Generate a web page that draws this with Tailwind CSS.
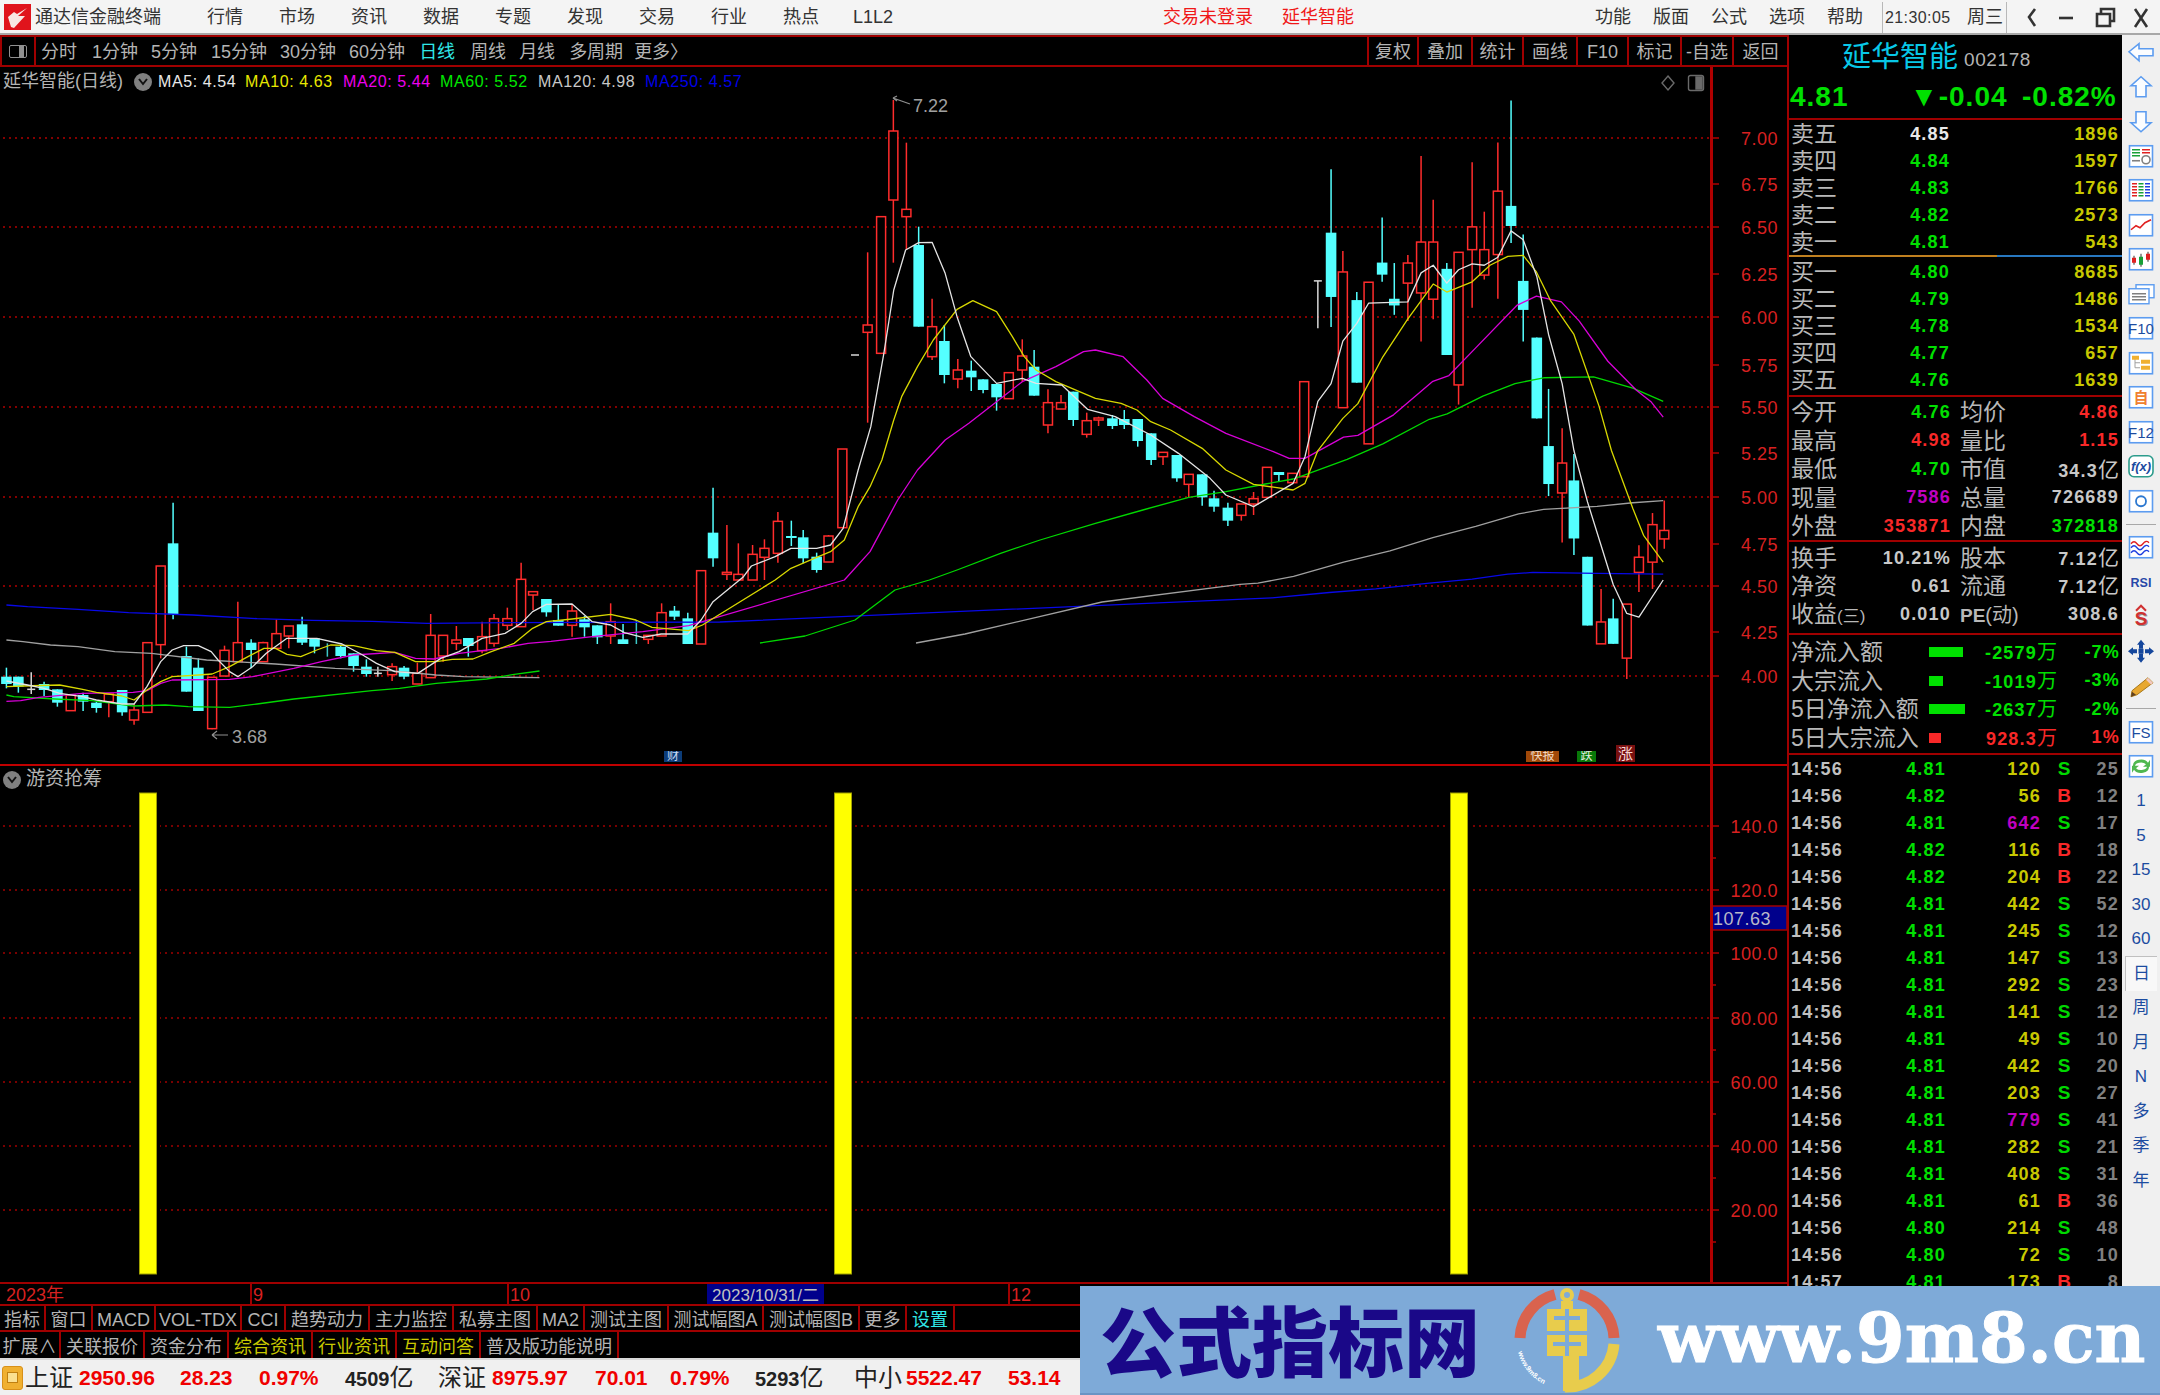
<!DOCTYPE html>
<html lang="zh-CN">
<head>
  <meta charset="UTF-8" />
  <title>通达信金融终端</title>
  <script src="https://cdn.jsdelivr.net/npm/@tailwindcss/browser@4"></script>
</head>
<body class="bg-black">
<div class="relative w-[2160px] h-[1395px] overflow-hidden bg-black flex flex-col text-[#b4b4b4] font-['Liberation_Sans','Noto_Sans_CJK_SC',sans-serif]">

  <!-- title bar -->
  <div class="h-[35px] shrink-0 bg-[#f4f4f4] border-b-2 border-[#a8a8a8] flex items-center pt-[2px] text-[18px] text-[#333] relative">
    <svg class="ml-[4px] -mt-[2px] w-[27px] h-[26px] shrink-0" viewBox="0 0 27 26">
      <rect width="27" height="26" fill="#e0141c"/>
      <path d="M23 4 L14 12 L21 12 L10 24 L7 23 L4 13 L10 8 L13 10 Z" fill="#f8e8e4"/>
    </svg>
    <span class="ml-[4px] w-[154px] whitespace-nowrap tracking-[0px]">通达信金融终端</span>
    <div id="menuLeft" class="flex"></div>
    <span class="ml-[254px] text-[#f01818] whitespace-nowrap w-[119px]">交易未登录</span>
    <span class="text-[#f01818] whitespace-nowrap w-[313px]">延华智能</span>
    <div class="flex gap-[22px] whitespace-nowrap">
      <span>功能</span><span>版面</span><span>公式</span><span>选项</span><span>帮助</span>
    </div>
    <div class="ml-[19px] h-[31px] w-[125px] border-x border-[#b8b8b8] flex items-center justify-between pl-[2px] pr-[3px] text-[16px] whitespace-nowrap">
      <span class="tracking-[0.4px]">21:30:05</span><span class="text-[18px]">周三</span>
    </div>
    <svg class="absolute left-[2020px] top-[6px] w-[140px] h-[24px]" viewBox="0 0 140 24" fill="none" stroke="#333" stroke-width="2.6">
      <path d="M15 3 L9 11 L15 20"/>
      <path d="M39 12 H53"/>
      <path d="M77 8 H90 V20 H77 Z M81 8 V3 H94 V15 H90"/>
      <path d="M115 3 L127 21 M127 3 L115 21"/>
    </svg>
  </div>

  <div class="flex flex-1 min-h-0">
    <!-- left side: toolbar, charts, tabs -->
    <div class="w-[1787px] shrink-0 flex flex-col">
      <div class="h-[32px] shrink-0 flex border-t-2 border-b-2 border-[#a00000] text-[18px] whitespace-nowrap">
        <div class="w-[36px] shrink-0 border-x-2 border-[#a00000] flex items-center justify-center">
          <div class="w-[18px] h-[13px] rounded-[2px] border border-[#909090] flex justify-end pr-[2px]"><div class="w-[5px] bg-[#909090]"></div></div>
        </div>
        <div id="periods" class="flex items-center flex-1 pt-[2px]"></div>
        <div id="tools" class="flex"></div>
      </div>

      <!-- main chart -->
      <div class="relative h-[699px] shrink-0 flex border-b-2 border-[#c00000]">
        <div class="relative w-[1710px] shrink-0">
          <svg id="kline" class="absolute inset-0" width="1710" height="697" viewBox="0 67 1710 697"></svg>
          <div class="relative h-[29px] flex items-center text-[16px] tracking-[0.6px] whitespace-nowrap">
            <span class="ml-[3px] w-[131px] text-[18px] tracking-[0px] text-[#b4b4b4]">延华智能(日线)</span>
            <span class="w-[18px] h-[18px] rounded-full bg-[#808080] flex items-center justify-center">
              <svg width="10" height="8" viewBox="0 0 10 8" fill="none" stroke="#111" stroke-width="2"><path d="M1 1 L5 6 L9 1"/></svg>
            </span>
            <span class="ml-[6px] w-[87px] text-[#e8e8e8]">MA5: 4.54</span>
            <span class="w-[98px] text-[#e8e800]">MA10: 4.63</span>
            <span class="w-[97px] text-[#ee00ee]">MA20: 5.44</span>
            <span class="w-[98px] text-[#00e800]">MA60: 5.52</span>
            <span class="w-[107px] text-[#c8c8c8]">MA120: 4.98</span>
            <span class="text-[#0000e8]">MA250: 4.57</span>
          </div>
          <svg class="absolute left-[1660px] top-[7px] w-[46px] h-[18px]" viewBox="0 0 46 18" fill="none" stroke="#6a6a6a" stroke-width="1.4">
            <path d="M8 2 L14 9 L8 16 L2 9 Z"/>
            <rect x="28.5" y="1.5" width="15" height="15" rx="2"/>
            <rect x="36" y="3" width="6" height="12" fill="#6a6a6a"/>
          </svg>
          <div class="absolute left-[664px] top-[684px] w-[18px] h-[11px] overflow-hidden bg-[#0c3c78] text-[#c8d8f0] text-[12px] leading-[11px] text-center">财</div>
          <div class="absolute left-[1526px] top-[684px] w-[33px] h-[11px] overflow-hidden bg-[#a04808] text-[#f0d8c0] text-[12px] leading-[11px] text-center">快报</div>
          <div class="absolute left-[1577px] top-[684px] w-[19px] h-[11px] overflow-hidden bg-[#087808] text-[#e0f0e0] text-[12px] leading-[11px] text-center">跌</div>
          <div class="absolute left-[1616px] top-[678px] w-[19px] h-[17px] overflow-hidden bg-[#781010] text-[#f8d8d8] text-[15px] leading-[17px] text-center">涨</div>
        </div>
        <svg id="mainAxis" class="border-l-[3px] border-[#b00000] shrink-0" width="77" height="697" viewBox="1713 67 74 697"></svg>
      </div>

      <!-- sub chart -->
      <div class="relative h-[516px] shrink-0 flex">
        <div class="relative w-[1710px] shrink-0">
          <svg id="subChart" class="absolute inset-0" width="1710" height="516" viewBox="0 766 1710 516"></svg>
          <div class="relative h-[27px] flex items-center whitespace-nowrap">
            <span class="ml-[3px] w-[18px] h-[18px] rounded-full bg-[#808080] flex items-center justify-center">
              <svg width="10" height="8" viewBox="0 0 10 8" fill="none" stroke="#111" stroke-width="2"><path d="M1 1 L5 6 L9 1"/></svg>
            </span>
            <span class="ml-[5px] text-[19px] text-[#b4b4b4]">游资抢筹</span>
          </div>
        </div>
        <svg id="subAxis" class="border-l-[3px] border-[#b00000] shrink-0" width="77" height="516" viewBox="1713 766 74 516"></svg>
      </div>

      <!-- date axis -->
      <div class="relative h-[24px] shrink-0 flex border-t-2 border-b-2 border-[#a00000] text-[18px] text-[#d82020] leading-[23px] whitespace-nowrap">
        <div class="w-[250px] pl-[6px]">2023年</div>
        <div class="w-[257px] border-l-2 border-[#a00000] pl-[1px]">9</div>
        <div class="w-[200px] border-l-2 border-[#a00000] pl-[1px]">10</div>
        <div class="w-[117px] bg-[#00008c] text-[#c0c0c0] text-center text-[17px]">2023/10/31/二</div>
        <div class="w-[184px]"></div>
        <div class="w-[100px] border-l-2 border-[#a00000] pl-[1px]">12</div>
      </div>

      <div id="tabsOne" class="h-[26px] shrink-0 flex border-b-2 border-[#a00000] text-[18px] whitespace-nowrap"></div>
      <div id="tabsTwo" class="h-[26px] shrink-0 flex text-[18px] whitespace-nowrap"></div>
    </div>

    <!-- quote panel -->
    <div class="w-[335px] shrink-0 border-l-2 border-[#a00000] flex flex-col whitespace-nowrap">
      <div class="h-[85px] shrink-0 border-b-2 border-[#a00000]">
        <div class="h-[46px] flex items-center pl-[53px]">
          <span class="text-[29px] text-[#08c8e8]">延华智能</span>
          <span class="ml-[6px] mt-[5px] text-[19px] text-[#b4b4b4] tracking-[0.6px]">002178</span>
        </div>
        <div class="h-[32px] flex items-center pl-[1px] font-bold text-[#00e000] text-[28px] tracking-[1px]">
          <span class="w-[120px]">4.81</span>
          <span class="w-[113px]">▼-0.04</span>
          <span class="-ml-[1px]">-0.82%</span>
        </div>
      </div>
      <div id="sell" class="h-[135px] shrink-0"></div>
      <div class="h-[2px] shrink-0 flex"><div class="w-[208px] bg-[#c08020]"></div><div class="flex-1 bg-[#2878c0]"></div></div>
      <div id="buy" class="h-[140px] shrink-0 pt-[1px] border-b-2 border-[#a00000]"></div>
      <div id="statsOne" class="h-[145px] shrink-0 border-b-2 border-[#a00000]"></div>
      <div id="statsTwo" class="h-[93px] shrink-0 pt-[2px] border-b-2 border-[#a00000]"></div>
      <div id="flows" class="h-[120px] shrink-0 border-b-2 border-[#a00000]"></div>
      <div id="ticks" class="flex-1 min-h-0 overflow-hidden"></div>
    </div>

    <!-- icon strip -->
    <div id="strip" class="w-[38px] shrink-0 bg-[#f0f0f0] flex flex-col items-center text-[#1c4ca0] text-[17px]"></div>
  </div>

  <!-- index ticker -->
  <div class="h-[37px] shrink-0 bg-[#f0f0f0] border-t-2 border-[#d8d8d8] flex items-center text-[24px] text-[#222] whitespace-nowrap">
    <span class="ml-[2px] w-[21px] h-[24px] rounded-[3px] bg-[#f0b030] border border-[#d89018] flex items-center justify-center"><span class="w-[11px] h-[11px] bg-[#fbe090] border border-[#c08010]"></span></span>
    <span class="ml-[2px] w-[54px]">上证</span>
    <span class="w-[101px] text-[21px] font-bold text-[#f00000]">2950.96</span>
    <span class="w-[79px] text-[21px] font-bold text-[#f00000]">28.23</span>
    <span class="w-[86px] text-[21px] font-bold text-[#f00000]">0.97%</span>
    <span class="w-[93px]"><b class="text-[20px]">4509</b>亿</span>
    <span class="w-[54px]">深证</span>
    <span class="w-[103px] text-[21px] font-bold text-[#f00000]">8975.97</span>
    <span class="w-[75px] text-[21px] font-bold text-[#f00000]">70.01</span>
    <span class="w-[85px] text-[21px] font-bold text-[#f00000]">0.79%</span>
    <span class="w-[99px]"><b class="text-[20px]">5293</b>亿</span>
    <span class="w-[52px]">中小</span>
    <span class="w-[102px] text-[21px] font-bold text-[#f00000]">5522.47</span>
    <span class="text-[21px] font-bold text-[#f00000]">53.14</span>
  </div>

  <!-- site watermark banner laid over the bottom right of the window -->
  <div class="absolute left-[1080px] top-[1286px] w-[1080px] h-[109px] bg-[#7eaad8] border-b-2 border-[#6a94c4] overflow-hidden whitespace-nowrap">
    <div class="absolute left-[20px] top-[-2px] text-[76px] leading-[109px] font-black text-[#1a0888] font-['Noto_Sans_CJK_SC',sans-serif]">公式指标网</div>
    <svg class="absolute left-[427px] top-0" width="120" height="109" viewBox="0 0 120 109" fill="none">
      <path d="M13 52 A47 47 0 0 1 48 8.5 M72 8.5 A47 47 0 0 1 107 52" stroke="#d9634e" stroke-width="11"/>
      <path d="M107 58 A47 47 0 0 1 58 101" stroke="#e8cc4c" stroke-width="11"/>
      <circle cx="60" cy="9" r="5" stroke="#e8cc4c" stroke-width="4"/>
      <path d="M54 15 H66 V23 H80 V45 H40 V23 H54 Z M40 49 H80 V70 H72 V105 H56 V70 H40 Z" fill="#e8cc4c"/>
      <path d="M47 30 H73 V34 H47 Z M58 23 H62 V45 H58 Z M46 56 H74 V60 H46 Z M58 49 H62 V70 H58 Z" fill="#7eaad8"/>
      <path id="logoArc" d="M11 66 A50 50 0 0 0 52 103"/>
      <text font-size="7" font-weight="700" fill="#ffffff"><textPath href="#logoArc">www.9m8.cn</textPath></text>
    </svg>
    <div class="absolute left-[578px] top-[-3px] text-[70px] leading-[109px] font-bold text-white [-webkit-text-stroke:1px_white] font-['DejaVu_Serif',serif]">www.9m8.cn</div>
  </div>
</div>

<script>
  const SVGNS = 'http://www.w3.org/2000/svg';
  const el = (parent, tag, attrs, text) => {
    const n = document.createElementNS(SVGNS, tag);
    for (const k in attrs) n.setAttribute(k, attrs[k]);
    if (text !== undefined) n.textContent = text;
    parent.appendChild(n);
    return n;
  };

  // title bar + toolbar
  document.getElementById('menuLeft').innerHTML = ['行情','市场','资讯','数据','专题','发现','交易','行业','热点','L1L2']
    .map(t => `<span class="w-[72px] text-center whitespace-nowrap">${t}</span>`).join('');

  document.getElementById('periods').innerHTML = [
    ['分时', 'ml-[5px]'], ['1分钟', 'ml-[15px]'], ['5分钟', 'ml-[13px]'], ['15分钟', 'ml-[14px]'], ['30分钟', 'ml-[13px]'],
    ['60分钟', 'ml-[13px]'], ['日线', 'ml-[14px] text-[#30e8e8]'], ['周线', 'ml-[15px]'], ['月线', 'ml-[13px]'],
    ['多周期', 'ml-[14px]'], ['更多〉', 'ml-[11px]']
  ].map(p => `<span class="${p[1]}">${p[0]}</span>`).join('');

  document.getElementById('tools').innerHTML = [
    ['复权','w-[50px]'],['叠加','w-[54px]'],['统计','w-[51px]'],['画线','w-[54px]'],['F10','w-[51px]'],['标记','w-[53px]'],['-自选','w-[52px]'],['返回','w-[55px]']
  ].map(t => `<span class="${t[1]} h-full flex items-center justify-center pt-[2px] border-l-2 border-[#a00000]">${t[0]}</span>`).join('');

  // tab rows
  const tab = ([t, w, c]) => `<span class="${w} ${c || ''} h-full flex items-center justify-center pt-[5px] border-r-2 border-[#a00000]">${t}</span>`;
  document.getElementById('tabsOne').innerHTML = [
    ['指标','w-[46px]'],['窗口','w-[47px]'],['MACD','w-[63px]'],['VOL-TDX','w-[86px]'],['CCI','w-[44px]'],['趋势动力','w-[84px]'],
    ['主力监控','w-[84px]'],['私募主图','w-[84px]'],['MA2','w-[47px]'],['测试主图','w-[84px]'],['测试幅图A','w-[95px]'],['测试幅图B','w-[96px]'],
    ['更多','w-[47px]'],['设置','w-[48px]','text-[#30e8e8]']
  ].map(tab).join('');
  document.getElementById('tabsTwo').innerHTML = [
    ['扩展∧','w-[61px]'],['关联报价','w-[84px]'],['资金分布','w-[84px]'],['综合资讯','w-[84px]','text-[#c8c800]'],['行业资讯','w-[84px]','text-[#c8c800]'],
    ['互动问答','w-[84px]','text-[#c8c800]'],['普及版功能说明','w-[138px]']
  ].map(tab).join('');

  // quote panel
  const lbl = 'text-[23px] text-[#b8b8b8]';
  const num = 'text-[18px] font-bold tracking-[1.2px]';
  const book = (rows) => rows.map(([l, p, v, pc]) => `
    <div class="h-[27px] flex items-center justify-between pt-[2px] pl-[2px] pr-[3px]">
      <span class="w-[97px] ${lbl}">${l}</span>
      <span class="w-[62px] text-right ${num} ${pc}">${p}</span>
      <span class="flex-1 text-right ${num} text-[#c8c800]">${v}</span>
    </div>`).join('');
  const G = 'text-[#00e000]', R = 'text-[#f82828]', W = 'text-[#c8c8c8]', M = 'text-[#c000c0]';
  document.getElementById('sell').innerHTML = book([
    ['卖五','4.85','1896','text-[#e8e8e8]'],['卖四','4.84','1597',G],['卖三','4.83','1766',G],['卖二','4.82','2573',G],['卖一','4.81','543',G]]);
  document.getElementById('buy').innerHTML = book([
    ['买一','4.80','8685',G],['买二','4.79','1486',G],['买三','4.78','1534',G],['买四','4.77','657',G],['买五','4.76','1639',G]]);

  const stat = (h, rows) => rows.map(([a, b, bc, c, d, dc]) => `
    <div class="${h} flex items-center pl-[2px] pr-[3px]">
      <span class="w-[160px] flex items-center justify-between"><span class="${lbl}">${a}</span><span class="${num} ${bc}">${b}</span></span>
      <span class="flex-1 ml-[9px] flex items-center justify-between"><span class="${lbl}">${c}</span><span class="${num} ${dc}">${d}</span></span>
    </div>`).join('');
  const yi = '<span class="text-[21px] font-normal tracking-[0px]">亿</span>';
  document.getElementById('statsOne').innerHTML = stat('h-[28.5px] pt-[2px]', [
    ['今开','4.76',G,'均价','4.86',R],['最高','4.98',R,'量比','1.15',R],['最低','4.70',G,'市值','34.3'+yi,W],
    ['现量','7586',M,'总量','726689',W],['外盘','353871',R,'内盘','372818',G]]);
  document.getElementById('statsTwo').innerHTML = stat('h-[28px]', [
    ['换手','10.21%',W,'股本','7.12'+yi,W],['净资','0.61',W,'流通','7.12'+yi,W],
    ['收益<span class="text-[17px]">(三)</span>','0.010',W,'<span class="text-[19px] font-bold">PE</span><span class="text-[20px]">(动)</span>','308.6',W]]);

  const wan = '<span class="text-[20px] font-normal tracking-[0px]">万</span>';
  document.getElementById('flows').innerHTML = [
    ['净流入额','-2579','-7%',G,'w-[34px] bg-[#00e000]'],['大宗流入','-1019','-3%',G,'w-[14px] bg-[#00e000]'],
    ['5日净流入额','-2637','-2%',G,'w-[36px] bg-[#00e000]'],['5日大宗流入','928.3','1%',R,'w-[12px] bg-[#f82828]']
  ].map(([l, a, p, c, b]) => `
    <div class="h-[28.5px] grid grid-cols-[138px_40px_88px_1fr] items-center pl-[2px] pr-[2px]">
      <span class="text-[23px] text-[#b8b8b8]">${l}</span>
      <span class="h-[10px] ${b}"></span>
      <span class="text-right ${num} ${c}">${a}${wan}</span>
      <span class="text-right ${num} ${c}">${p}</span>
    </div>`).join('');

  const tickRows = [
    ['14:56','4.81','120','S','25'],['14:56','4.82','56','B','12'],['14:56','4.81','642','S','17'],['14:56','4.82','116','B','18'],
    ['14:56','4.82','204','B','22'],['14:56','4.81','442','S','52'],['14:56','4.81','245','S','12'],['14:56','4.81','147','S','13'],
    ['14:56','4.81','292','S','23'],['14:56','4.81','141','S','12'],['14:56','4.81','49','S','10'],['14:56','4.81','442','S','20'],
    ['14:56','4.81','203','S','27'],['14:56','4.81','779','S','41'],['14:56','4.81','282','S','21'],['14:56','4.81','408','S','31'],
    ['14:56','4.81','61','B','36'],['14:56','4.80','214','S','48'],['14:56','4.80','72','S','10'],['14:57','4.81','173','B','8']
  ];
  document.getElementById('ticks').innerHTML = tickRows.map(([t, p, v, s, n]) => {
    const vc = (v === '642' || v === '779') ? 'text-[#c000c0]' : 'text-[#c8c800]';
    const sc = s === 'B' ? 'text-[#f82828]' : 'text-[#00d800]';
    return `<div class="h-[27px] grid grid-cols-[60px_95px_95px_46px_32px] items-center pl-[2px]">
      <span class="${num} text-[#c0c0c0]">${t}</span>
      <span class="text-right ${num} text-[#00e000]">${p}</span>
      <span class="text-right ${num} ${vc}">${v}</span>
      <span class="text-center text-[19px] font-bold ${sc}">${s}</span>
      <span class="text-right ${num} text-[#808080]">${n}</span>
    </div>`;
  }).join('');

  // icon strip
  const frame = '<rect x="3.5" y="2" width="23" height="21" fill="#ffffff" stroke="#5c9cf0" stroke-width="1.6"/>';
  const ic = (body) => `<svg class="h-[34.5px] w-[30px] shrink-0" viewBox="0 0 30 25">${body}</svg>`;
  const ftxt = (t, c) => `${frame}<text x="15" y="18" text-anchor="middle" font-size="15" fill="${c}">${t}</text>`;
  const arrow = (d) => `<path d="${d}" fill="#fbfdff" stroke="#5c9cf0" stroke-width="1.6"/>`;
  const sep = '<div class="h-[12px] w-full shrink-0 flex items-center justify-center"><div class="w-[30px] h-[1px] bg-[#a8a8a8]"></div></div>';
  const word = (t, c) => `<div class="h-[34.5px] shrink-0 flex items-center justify-center ${c || ''}">${t}</div>`;
  document.getElementById('strip').innerHTML = [
    ic(arrow('M3 12 L13 4 V9 H27 V16 H13 V21 Z')),
    ic(arrow('M15 2 L25 11 H20 V22 H10 V11 H5 Z')),
    ic(arrow('M15 23 L25 14 H20 V3 H10 V14 H5 Z')),
    ic(frame + '<path d="M6 6 H14 M6 9 H14 M6 12 H14" stroke="#18a038" stroke-width="1.6"/><path d="M16 6 H24 M16 9 H24" stroke="#e02020" stroke-width="1.6"/><path d="M6 17 H14" stroke="#808080" stroke-width="1.6"/><circle cx="20" cy="16" r="4" fill="#fff" stroke="#808080" stroke-width="1.6"/>'),
    ic(frame + '<path d="M6 6 H11 M6 9 H11 M6 12 H11 M6 15 H11 M6 18 H11" stroke="#e02020" stroke-width="1.6"/><path d="M12.5 6 H17.5 M12.5 9 H17.5 M12.5 12 H17.5 M12.5 15 H17.5 M12.5 18 H17.5" stroke="#18a038" stroke-width="1.6"/><path d="M19 6 H24 M19 9 H24 M19 12 H24 M19 15 H24 M19 18 H24" stroke="#2040e0" stroke-width="1.6"/>'),
    ic(frame + '<path d="M5 17 L10 13 L14 15 L19 10 L25 7" fill="none" stroke="#e02020" stroke-width="1.6"/>'),
    ic(frame + '<path d="M8 9 V18 M15 7 V20 M22 5 V15" stroke="#333" stroke-width="1"/><rect x="6" y="11" width="4" height="5" fill="#e02020"/><rect x="13" y="10" width="4" height="8" fill="#18a038"/><rect x="20" y="7" width="4" height="6" fill="#e02020"/>'),
    ic('<rect x="10" y="3" width="18" height="13" fill="#fff" stroke="#5c9cf0" stroke-width="1.4"/><rect x="3" y="7" width="20" height="15" fill="#fff" stroke="#5c9cf0" stroke-width="1.4"/><path d="M6 12 H20 M6 15 H20 M6 18 H20" stroke="#808080" stroke-width="1.4"/>'),
    ic(ftxt('F10', '#1c4ca0')),
    ic(frame + '<path d="M9 7 V17 H14 M9 12 H14" fill="none" stroke="#a0a0a0"/><rect x="6" y="5" width="7" height="4" fill="#f0b030"/><rect x="15" y="9" width="9" height="4" fill="#f0b030"/><rect x="15" y="15" width="9" height="4" fill="#f0b030"/>'),
    ic(frame + '<text x="15" y="18.5" text-anchor="middle" font-size="15" font-weight="700" fill="#f08030">自</text>'),
    ic(ftxt('F12', '#1c4ca0')),
    ic('<rect x="3" y="2" width="24" height="21" rx="5" fill="#fff" stroke="#2c9c8c" stroke-width="1.6"/><text x="15" y="17" text-anchor="middle" font-size="13" font-style="italic" font-weight="700" fill="#1c4ca0">f(x)</text>'),
    ic(frame + '<circle cx="15" cy="12.5" r="5" fill="none" stroke="#2c78d0" stroke-width="1.8"/>'),
    sep,
    ic(frame + '<path d="M5 9 Q8 5 11 9 T17 9 T23 8" fill="none" stroke="#e02020" stroke-width="1.3"/><path d="M5 13 Q8 9 11 13 T17 13 T23 12" fill="none" stroke="#2040e0" stroke-width="1.3"/><path d="M5 18 Q8 14 11 18 T17 18 T23 17" fill="none" stroke="#2040e0" stroke-width="1.3"/>'),
    ic('<text x="15" y="17" text-anchor="middle" font-size="12.5" font-weight="700" fill="#2848a8">RSI</text>'),
    ic('<path d="M10 7 L15 2 L20 7" fill="none" stroke="#d03030" stroke-width="2"/><text x="16" y="22" text-anchor="middle" font-size="19" font-weight="700" fill="#909090">S</text><text x="15" y="21" text-anchor="middle" font-size="19" font-weight="700" fill="#d03030">S</text>'),
    ic('<path d="M15 1 L19 6 H17 V10 H13 V6 H11 Z M15 24 L19 19 H17 V15 H13 V19 H11 Z M2 12.5 L7 8.5 V10.5 H11 V14.5 H7 V16.5 Z M28 12.5 L23 8.5 V10.5 H19 V14.5 H23 V16.5 Z" fill="#14469c"/><rect x="12.5" y="10" width="5" height="5" fill="#14469c"/>'),
    ic('<path d="M6 18 L22 5 L27 10 L11 22 L5 24 Z" fill="#e8a830" stroke="#a87818"/><path d="M22 5 L27 10 L25 12 L20 7 Z" fill="#f0c8c0"/><path d="M5 24 L6 19 L10 22 Z" fill="#604020"/>'),
    sep,
    ic(ftxt('FS', '#1c4ca0')),
    ic(frame + '<path d="M7 12 A8 6 0 0 1 22 9 L24 6 V13 H17 L20 10.5 A6 4 0 0 0 9 13 Z M23 13 A8 6 0 0 1 8 16 L6 19 V12 H13 L10 14.5 A6 4 0 0 0 21 12 Z" fill="#50b850"/>'),
    word('1'), word('5'), word('15'), word('30'), word('60'),
    word('日', 'w-[32px] bg-[#f8f8f8] border-t border-l border-[#c0c0c0]'), word('周'), word('月'), word('N'), word('多'), word('季'), word('年')
  ].join('');

  // chart data, read off the picture: [x, high, top, bottom, low, type]
  const z6 = ([x, y]) => [x / 2.178, 480 + y / 3];
  const z7 = ([x, y]) => [700 + x / 2.529, 80 + y / 3];
  const z8 = ([x, y]) => [1240 + x / 2.8, 80 + y / 2.24];

  const c6 = [
    [14,563,590,612,625,'c'],[40,590,590,620,638,'c'],[68,577,628,628,642,'w'],[96,605,612,630,648,'c'],[125,628,628,668,680,'c'],
    [154,645,645,692,692,'r'],[181,638,645,665,693,'c'],[210,665,668,684,698,'c'],[237,640,642,665,712,'r'],[266,630,630,697,707,'c'],
    [292,672,690,720,734,'r'],[321,488,488,697,697,'r'],[350,258,258,494,535,'r'],[377,68,190,403,418,'c'],[406,500,528,635,635,'c'],
    [432,535,563,693,693,'c'],[462,592,592,746,748,'r'],[489,497,511,588,588,'r'],[518,365,488,545,545,'r'],[547,478,488,510,565,'c'],
    [573,485,488,545,545,'r'],[602,418,461,505,505,'r'],[629,438,438,468,505,'r'],[658,410,433,488,495,'c'],[685,475,475,500,520,'c'],
    [713,490,510,510,530,'l'],[742,495,500,528,535,'c'],[770,520,520,558,575,'c'],[798,538,560,582,590,'c'],[823,560,580,580,590,'w'],
    [854,550,560,584,603,'r'],[880,558,563,590,598,'c'],[909,548,580,612,612,'r'],[938,402,466,593,593,'r'],[965,466,466,528,545,'r'],
    [994,438,480,490,510,'r'],[1020,474,474,498,530,'c'],[1050,425,470,512,520,'r'],[1076,402,416,490,500,'r'],[1105,383,416,436,450,'r'],
    [1135,248,298,440,440,'r'],[1161,335,335,345,390,'r'],[1190,357,357,397,410,'c'],[1216,375,420,437,437,'c'],[1246,375,393,436,470,'r'],
    [1273,408,418,442,470,'c'],[1301,436,436,472,492,'c'],[1330,370,425,468,492,'r'],[1357,432,478,492,492,'c'],[1386,420,450,450,492,'l'],
    [1412,466,466,478,492,'r'],[1441,370,398,468,468,'r'],[1469,378,392,410,420,'c'],[1498,398,415,492,492,'c'],[1527,272,272,492,492,'r']
  ];
  const c7 = [
    [33,1223,1358,1435,1460,'c'],[68,1335,1477,1482,1500,'r'],[97,1390,1483,1500,1500,'r'],[133,1395,1423,1500,1500,'r'],[163,1378,1405,1432,1500,'r'],
    [197,1296,1324,1420,1448,'r'],[231,1322,1368,1374,1398,'c'],[261,1350,1372,1435,1450,'c'],[295,1418,1430,1470,1478,'c'],[325,1365,1368,1446,1446,'r'],
    [360,1107,1107,1343,1343,'r'],[392,825,825,825,825,'w'],[424,517,735,757,1028,'r'],[458,410,410,820,820,'r'],[489,60,153,360,548,'r'],
    [522,188,388,410,510,'r'],[553,440,495,740,740,'c'],[587,656,740,830,840,'r'],[618,735,783,885,910,'c'],[652,837,870,897,925,'r'],
    [686,842,872,892,933,'c'],[716,898,898,930,940,'c'],[750,912,912,952,992,'c'],[781,878,878,956,956,'r'],[815,778,828,870,905,'r'],
    [845,810,860,947,947,'c'],[880,928,968,1035,1060,'r'],[913,945,968,987,987,'r'],[944,935,935,1020,1038,'c'],[978,998,1022,1063,1073,'r'],
    [1008,1010,1014,1020,1038,'r'],[1043,1005,1015,1038,1047,'c'],[1073,990,1017,1035,1047,'c'],[1107,1017,1017,1083,1100,'c'],[1141,1060,1060,1140,1155,'c'],
    [1171,1117,1117,1130,1155,'r'],[1206,1125,1125,1195,1205,'c'],[1236,1183,1183,1213,1252,'r'],[1270,1183,1183,1252,1277,'c'],[1300,1232,1255,1280,1295,'c'],
    [1335,1268,1283,1322,1338,'c'],[1369,1272,1272,1306,1322,'r'],[1400,1236,1256,1272,1305,'r'],[1434,1162,1162,1252,1252,'r'],[1464,1176,1176,1185,1205,'c'],
    [1498,1180,1180,1208,1208,'r'],[1528,905,905,1190,1190,'r']
  ];
  const c8 = [
    [218,450,450,450,556,'w'],[255,200,342,486,553,'c'],[288,383,430,734,734,'r'],[327,475,493,678,678,'c'],[360,453,453,815,815,'r'],
    [398,308,409,436,452,'c'],[432,410,490,505,526,'c'],[470,392,410,455,540,'r'],[507,170,363,477,586,'r'],[541,268,363,491,536,'r'],
    [579,410,423,616,616,'c'],[612,386,386,683,727,'r'],[650,184,329,380,510,'r'],[684,295,380,437,447,'r'],[722,140,249,391,490,'r'],
    [759,46,282,327,365,'c'],[793,346,450,515,586,'c'],[831,577,577,758,758,'c'],[864,692,820,905,932,'c'],[902,780,858,925,1036,'r'],
    [935,838,897,1027,1064,'c'],[973,1068,1068,1222,1222,'c'],[1011,1140,1214,1263,1263,'r'],[1045,1162,1206,1263,1263,'c'],[1083,1174,1174,1295,1342,'r'],
    [1117,1042,1069,1103,1147,'r'],[1155,970,996,1080,1140,'r'],[1188,942,1009,1028,1050,'r']
  ];

  const pts = (list, fn) => list.map(p => fn(p));
  const MA5 = [
    ...pts([[14,603],[60,615],[96,625],[130,640],[180,650],[210,660],[266,672],[292,672],[320,620],[350,545],[375,510],[400,497],[432,497],[460,515],[475,540],[500,575],[518,590],[550,560],[580,520],[625,475],[690,475],[745,492],[790,525],[820,550],[860,575],[910,580],[960,535],[1000,515],[1050,475],[1100,460],[1135,430],[1160,395],[1190,373],[1246,372],[1290,425],[1330,435],[1360,458],[1400,472],[1440,462],[1498,462],[1527,420],[1553,365]], z6),
    ...pts([[110,1490],[130,1458],[190,1430],[230,1405],[295,1405],[330,1395],[362,1345],[400,1170],[432,1040],[465,820],[490,630],[520,510],[553,488],[587,487],[620,580],[650,710],[685,830],[750,910],[815,895],[850,910],[915,915],[980,988],[1050,1010],[1140,1065],[1210,1120],[1290,1195],[1330,1245],[1400,1280],[1500,1210],[1530,1130]], z7),
    ...pts([[218,720],[255,680],[288,585],[327,545],[360,500],[470,497],[507,432],[541,415],[579,455],[612,425],[650,412],[684,415],[722,397],[759,338],[793,358],[831,440],[864,570],[902,680],[935,830],[973,945],[1010,1040],[1045,1130],[1083,1195],[1117,1203],[1185,1120]], z8)
  ];
  const MA10 = [
    ...pts([[14,620],[50,618],[130,615],[180,628],[210,637],[266,648],[292,660],[320,630],[350,605],[375,590],[432,585],[462,582],[500,560],[540,530],[575,505],[600,505],[625,523],[655,530],[690,510],[720,495],[770,497],[820,512],[860,517],[905,545],[950,545],[985,538],[1030,537],[1070,515],[1120,490],[1160,445],[1190,425],[1246,417],[1330,403],[1385,420],[1420,442],[1500,452],[1530,435]], z6),
    ...pts([[190,1500],[230,1465],[295,1432],[330,1415],[365,1380],[400,1280],[430,1220],[460,1140],[490,1020],[510,950],[550,860],[590,780],[650,688],[690,662],[750,695],[790,770],[820,830],[850,870],[900,905],[1000,955],[1065,970],[1105,990],[1140,1025],[1190,1050],[1270,1105],[1330,1170],[1400,1213],[1500,1230],[1530,1210]], z7),
    ...pts([[218,830],[288,758],[330,725],[400,620],[470,535],[541,457],[579,475],[650,452],[700,415],[750,395],[793,393],[830,430],[870,495],[935,570],[1005,730],[1040,830],[1100,960],[1130,1020],[1185,1080]], z8)
  ];
  const MA20 = [
    ...pts([[14,664],[45,662],[85,652],[180,640],[290,637],[320,632],[350,610],[375,600],[500,598],[550,590],[640,565],[700,545],[770,525],[860,517],[905,535],[945,537],[1000,520],[1090,505],[1150,490],[1200,484],[1290,470],[1400,455],[1500,437]], z6),
    ...pts([[365,1500],[430,1415],[500,1260],[550,1170],[620,1080],[680,1030],[750,965],[815,905],[900,860],[970,815],[1000,810],[1070,830],[1130,900],[1170,955],[1250,1010],[1330,1060],[1450,1115],[1490,1135],[1530,1135]], z7),
    ...pts([[290,800],[330,796],[430,750],[540,675],[585,662],[660,600],[775,505],[830,484],[900,497],[950,540],[1030,630],[1110,695],[1150,720],[1185,755]], z8)
  ];
  const MA60a = pts([[14,645],[30,650],[120,657],[200,662],[290,678],[360,675],[410,680],[500,682],[560,672],[640,657],[810,632],[870,625],[950,610],[1060,597],[1120,583],[1175,573]], z6);
  const MA60b = [[760,643],[805,636],[855,620],[895,590],
    ...pts([[580,1500],[650,1470],[760,1420],[860,1380],[1000,1330],[1120,1290],[1236,1252],[1330,1235],[1430,1212],[1500,1197]], z7),
    ...pts([[180,885],[300,850],[400,815],[530,760],[580,748],[680,708],[770,680],[850,667],[990,665],[1100,690],[1185,720]], z8)];
  const MA120a = pts([[14,480],[50,485],[110,495],[170,500],[250,515],[330,520],[450,540],[600,552],[730,565],[850,572],[950,585],[1010,590],[1175,593]], z6);
  const MA120b = [[916,643],[965,634],[1102,602],
    ...pts([[0,1130],[50,1127],[150,1112],[290,1080],[420,1055],[540,1025],[660,1000],[780,972],[850,962],[1000,955],[1100,947],[1185,942]], z8)];
  const MA250 = [
    ...pts([[14,375],[60,380],[170,388],[280,398],[420,405],[560,416],[680,421],[810,424],[930,430],[1120,428],[1568,426]], z6),
    ...pts([[90,1160],[250,1148],[380,1140],[530,1127],[650,1118],[750,1107],[820,1103],[1000,1105],[1185,1107]], z8)
  ];

  const kline = document.getElementById('kline');
  [138,227,317,407,497,586,676].forEach(y =>
    el(kline, 'line', { x1: 3, x2: 1710, y1: y, y2: y, stroke: '#b00000', 'stroke-width': 1.4, 'stroke-dasharray': '2 4' }));

  const drawCandle = ([x, hi, top, bot, lo, t]) => {
    const color = (t === 'r') ? '#ff2c2c' : (t === 'w') ? '#d8d8d8' : '#54ffff';
    el(kline, 'line', { x1: x, x2: x, y1: hi, y2: lo, stroke: t === 'l' ? '#3cc8c8' : color, 'stroke-width': 1.5 });
    if (t === 'w') { el(kline, 'line', { x1: x - 4, x2: x + 4, y1: top, y2: top, stroke: color, 'stroke-width': 1.5 }); return; }
    if (t === 'l') return;
    if (t === 'r') el(kline, 'rect', { x: x - 4.5, y: top, width: 9, height: Math.max(bot - top, 2), fill: '#000', stroke: color, 'stroke-width': 1.5 });
    else el(kline, 'rect', { x: x - 5.3, y: top, width: 10.6, height: Math.max(bot - top, 2), fill: color });
  };
  const toFull = (list, fn) => list.map(c => {
    const [x, hi] = fn([c[0], c[1]]);
    const [, top] = fn([0, c[2]]);
    const [, bot] = fn([0, c[3]]);
    const [, lo] = fn([0, c[4]]);
    return [x, hi, top, bot, lo, c[5]];
  });
  [...toFull(c6, z6), ...toFull(c7, z7), ...toFull(c8, z8)].forEach(drawCandle);

  const poly = (list, color) => el(kline, 'polyline', {
    points: list.map(p => p.join(',')).join(' '), fill: 'none', stroke: color, 'stroke-width': 1.3, 'stroke-linejoin': 'round'
  });
  poly(MA250, '#0808e8'); poly(MA120a, '#a0a0a0'); poly(MA120b, '#a0a0a0');
  poly(MA60a, '#00d800'); poly(MA60b, '#00d800'); poly(MA20, '#d800d8'); poly(MA10, '#d8d800'); poly(MA5, '#e4e4e4');

  // high / low notes on the chart
  el(kline, 'path', { d: 'M893 98 L897 96 M893 98 L897 101 M893 98 L910 104', fill: 'none', stroke: '#909090', 'stroke-width': 1.2 });
  el(kline, 'text', { x: 913, y: 112, 'font-size': 18, fill: '#a0a0a0' }, '7.22');
  el(kline, 'path', { d: 'M212 735 L228 735 M212 735 L217 731 M212 735 L217 739', fill: 'none', stroke: '#909090', 'stroke-width': 1.2 });
  el(kline, 'text', { x: 232, y: 743, 'font-size': 18, fill: '#a0a0a0' }, '3.68');

  // price scales
  const mainAxis = document.getElementById('mainAxis');
  [['7.00',138],['6.75',184],['6.50',227],['6.25',274],['6.00',317],['5.75',365],['5.50',407],['5.25',453],['5.00',497],['4.75',544],['4.50',586],['4.25',632],['4.00',676]].forEach(([t, y]) => {
    el(mainAxis, 'line', { x1: 1712, x2: 1719, y1: y, y2: y, stroke: '#b00000', 'stroke-width': 1.5 });
    el(mainAxis, 'text', { x: 1778, y: y + 7, 'text-anchor': 'end', 'font-size': 18, 'letter-spacing': '0.5', fill: '#d82020' }, t);
  });
  const sub = document.getElementById('subChart');
  const subAxis = document.getElementById('subAxis');
  [['140.0',826],['120.0',890],['100.0',953],['80.00',1018],['60.00',1082],['40.00',1146],['20.00',1210]].forEach(([t, y]) => {
    el(sub, 'line', { x1: 3, x2: 1710, y1: y, y2: y, stroke: '#a00000', 'stroke-width': 1.4, 'stroke-dasharray': '2 4' });
    el(subAxis, 'line', { x1: 1712, x2: 1719, y1: y, y2: y, stroke: '#b00000', 'stroke-width': 1.5 });
    el(subAxis, 'line', { x1: 1712, x2: 1716, y1: y + 32, y2: y + 32, stroke: '#b00000', 'stroke-width': 1.5 });
    el(subAxis, 'text', { x: 1778, y: y + 7, 'text-anchor': 'end', 'font-size': 18, 'letter-spacing': '0.5', fill: '#d82020' }, t);
  });
  el(subAxis, 'rect', { x: 1712, y: 906, width: 75, height: 24, fill: '#00008c', stroke: '#a00000', 'stroke-width': 1.5 });
  el(subAxis, 'text', { x: 1713, y: 925, 'font-size': 18, 'letter-spacing': '0.5', fill: '#b8b8c8' }, '107.63');

  [[139, 17], [834, 17], [1450, 17]].forEach(([x, w]) => {
    el(sub, 'rect', { x: x - 4, y: 790, width: w + 8, height: 488, fill: '#000' });
    el(sub, 'rect', { x: x + 0.5, y: 793, width: w, height: 481, fill: '#ffff00', stroke: '#a0a000', 'stroke-width': 1 });
  });
</script>
</body>
</html>
